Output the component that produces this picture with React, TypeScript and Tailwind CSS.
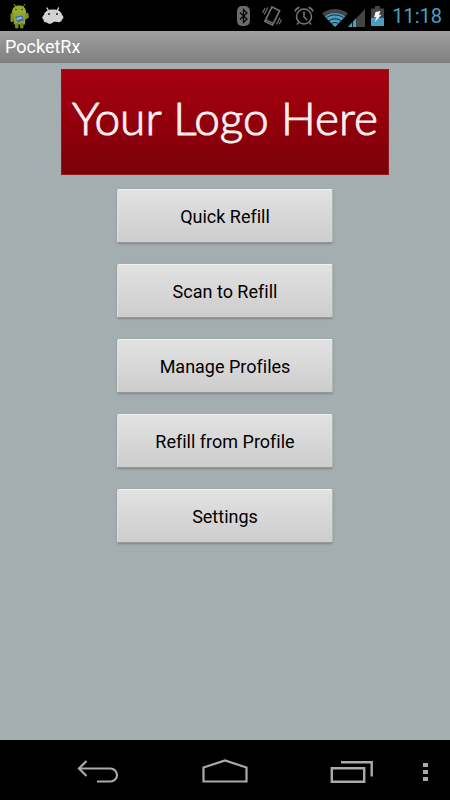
import React from 'react';

const menuItems = [
  'Quick Refill',
  'Scan to Refill',
  'Manage Profiles',
  'Refill from Profile',
  'Settings',
];

const DebugDroidIcon: React.FC = () => (
  <svg width="20" height="26" viewBox="0 0 20 26" aria-hidden="true">
    <path d="M4 1l2 3M15 1l-2 3" stroke="#8f9e2c" strokeWidth="1" />
    <path d="M2 10.500C1.500 5 5 2.500 9 2.500s7.500 2.500 7 8z" fill="#9bab2f" />
    <circle cx="6" cy="6.500" r="0.800" fill="#303818" />
    <circle cx="12" cy="6.500" r="0.800" fill="#303818" />
    <path d="M2.500 10h13.500l-1 11.500H4z" fill="#91a52c" />
    <rect x="0.500" y="10" width="3" height="9" rx="1.500" fill="#7f9428" />
    <path d="M15 11l3-1.500 1 5-3.500 2z" fill="#7f9428" />
    <path d="M5 13.500l7.500-1 1.500 5-6.500 2z" fill="#3f73b5" />
    <path d="M6.500 15l5-1 .8 1.500-5.200 1.300z" fill="#a5bfd5" />
    <rect x="5" y="20" width="3.500" height="5.500" rx="1.500" fill="#70852a" />
    <rect x="10" y="20" width="3.500" height="5.500" rx="1.500" fill="#70852a" />
  </svg>
);

const DroidHeadIcon: React.FC = () => (
  <svg width="22" height="17" viewBox="0 0 22 17" aria-hidden="true">
    <path d="M5 1l2 3.500M16.500 1l-1.500 3.500" stroke="#d2d2d2" strokeWidth="1.400" strokeLinecap="round" />
    <path
      d="M2 8C2.500 4.500 6 2.500 11 2.500s8.500 2 9 5.500c1.800 1 1.800 3.500 0 4.500-.5 2.500-2.500 3-4.500 2.500-1.500-.2-3-.2-4.500.2-1 1.700-5 2.200-6 .2-2 .5-3.500-.5-3.500-2.800C-.3 11.500.2 9 2 8z"
      fill="#d2d2d2"
    />
    <circle cx="7" cy="7" r="0.900" fill="#111" />
    <circle cx="15" cy="7" r="0.900" fill="#111" />
  </svg>
);

const BluetoothIcon: React.FC = () => (
  <svg width="13" height="20" viewBox="0 0 13 20" aria-hidden="true">
    <rect x="0" y="0" width="13" height="20" rx="5" fill="#6c6c6c" />
    <path d="M3 6.500l7 6.500-3.500 3.500v-13L10 7l-7 6.500" fill="none" stroke="#050505" strokeWidth="1.300" />
  </svg>
);

const VibrateIcon: React.FC = () => (
  <svg width="20" height="20" viewBox="0 0 20 20" fill="none" stroke="#707070" aria-hidden="true">
    <path d="M10 .9l7.700 3.800-7.200 14.400-7.700-3.800z" strokeWidth="1.700" strokeLinejoin="round" />
    <path d="M4 13.800l7 3.400" strokeWidth="1.500" />
    <path d="M5.800 1.500L2.300 8.500M3 2L.6 7" strokeWidth="1.200" />
    <path d="M18 11.500l-3.500 7M19.500 13.500l-2.300 4.700" strokeWidth="1.200" />
  </svg>
);

const AlarmIcon: React.FC = () => (
  <svg width="20" height="20" viewBox="0 0 20 20" fill="none" stroke="#777" aria-hidden="true">
    <circle cx="10" cy="10.500" r="7.500" strokeWidth="1.500" />
    <path d="M10 5.500V11l3.200 3" strokeWidth="1.500" />
    <path d="M1 5.500C1.500 3.500 3.200 2 5.500 1.500M19 5.500c-.5-2-2.200-3.500-4.500-4" strokeWidth="1.500" />
    <path d="M4.500 16.500L3 18.500M15.500 16.500l1.500 2" strokeWidth="1.500" />
  </svg>
);

const WifiIcon: React.FC = () => (
  <svg width="26" height="18" viewBox="0 0 26 18" aria-hidden="true">
    <path d="M0 4.500C7-1.500 19-1.500 26 4.500L13 18z" fill="#444" />
    <path d="M2.800 7.500C8.500 2.800 17.500 2.800 23.200 7.500L13 18z" fill="#4a9fc0" />
    <path d="M4.500 8.700c5-3.700 12-3.700 17 0M7 11.700c3.500-2.500 8.500-2.500 12 0M9.800 14.400c2-1.200 4.400-1.200 6.400 0" fill="none" stroke="#10252e" strokeWidth="1" />
  </svg>
);

const SignalIcon: React.FC = () => (
  <svg width="17" height="18" viewBox="0 0 17 18" aria-hidden="true">
    <path d="M17 0v18H0z" fill="#444" />
    <path d="M8 9.500V18H0z" fill="#4a9fc0" />
    <path d="M4.500 13v5" stroke="#10252e" />
  </svg>
);

const BatteryIcon: React.FC = () => (
  <svg width="13" height="20" viewBox="0 0 13 20" aria-hidden="true">
    <path d="M4 0h5v2.500h4V12H0V2.500h4z" fill="#444" />
    <path d="M0 12h13v8H0z" fill="#4a9fc0" />
    <path d="M4.500 6l5-1-1.500 4 2.500-.3L4 16l1.300-5L3 11.500z" fill="#f4f4f4" />
  </svg>
);

const StatusBar: React.FC = () => (
  <header className="flex h-[31px] items-center justify-between bg-black pr-2 pl-[10px]">
    <div className="flex items-center gap-3">
      <DebugDroidIcon />
      <DroidHeadIcon />
    </div>
    <div className="flex items-center">
      <div className="flex items-center gap-3">
        <BluetoothIcon />
        <VibrateIcon />
        <AlarmIcon />
      </div>
      <div className="ml-2 flex items-center pt-1">
        <WifiIcon />
        <SignalIcon />
      </div>
      <div className="ml-[6px] flex items-center gap-2">
        <BatteryIcon />
        <span className="text-[20px] leading-6 text-[#4a9fc0]">11:18</span>
      </div>
    </div>
  </header>
);

const NavBar: React.FC = () => (
  <nav className="flex h-[60px] items-center bg-black pt-1 pl-[35px] text-[#aaa]">
    <div className="flex flex-1 items-center">
      <button type="button" aria-label="Back" className="flex flex-1 justify-center">
        <svg width="44" height="26" viewBox="0 0 44 26" fill="none" stroke="currentColor" strokeWidth="2.200">
          <path d="M10.500 2L3 9.500l7.500 7.500" />
          <path d="M3 9.500h31.500a6.500 6.500 0 0 1 0 13H21" />
        </svg>
      </button>
      <button type="button" aria-label="Home" className="flex flex-1 justify-center">
        <svg width="48" height="26" viewBox="0 0 48 26" fill="none" stroke="currentColor" strokeWidth="2.200">
          <path d="M2.500 22.500V8.500L24 1.500l21.500 7v14z" />
        </svg>
      </button>
      <button type="button" aria-label="Recent apps" className="flex flex-1 justify-center">
        <svg width="44" height="26" viewBox="0 0 44 26" fill="none" stroke="currentColor" strokeWidth="2.400">
          <path d="M1.800 9.300h32.400v13.400H1.800z" />
          <path d="M11 3.300h30.700V17.500" />
        </svg>
      </button>
    </div>
    <button type="button" aria-label="Menu" className="flex w-[35px] justify-start pl-2">
      <svg width="5" height="18" viewBox="0 0 5 18" fill="currentColor">
        <path d="M0 0h5v4H0zM0 7h5v4H0zM0 14h5v4H0z" />
      </svg>
    </button>
  </nav>
);

export default function App() {
  return (
    <div className="flex min-h-screen flex-col bg-[#a4adaf] font-['Roboto',sans-serif] [font-variant-ligatures:none]">
      <StatusBar />
      <div className="flex h-8 items-center border-b border-[#7c7c7c] bg-linear-to-b from-[#a0a0a0] to-[#808080] px-[5px]">
        <h1 className="text-lg leading-6 text-white">PocketRx</h1>
      </div>

      <main className="flex flex-1 flex-col items-center px-4 pt-[6px]">
        <div className="flex h-[106px] w-full max-w-[328px] items-center justify-center border border-[#8a1c20] bg-linear-to-b from-[#a8000f] to-[#7c0008] pb-2 font-['Lato',sans-serif] text-[46px] leading-[60px] font-light whitespace-nowrap text-[#fbeeee] [-webkit-text-stroke:1px_#fbeeee]">
          Your Logo Here
        </div>
        <div className="mt-[14px] flex w-full max-w-[216px] flex-col gap-[21px]">
          {menuItems.map((label) => (
            <button
              key={label}
              type="button"
              className="h-[54px] rounded-[2px] border border-t-[#f0f0f0] border-r-[#b4b8b9] border-b-[#929899] border-l-[#e0e2e2] bg-linear-to-b from-[#e2e2e2] to-[#cdcdcd] pt-px text-lg leading-6 text-black shadow-[0_1px_2px_#7e8789]"
            >
              {label}
            </button>
          ))}
        </div>
      </main>

      <NavBar />
    </div>
  );
}
